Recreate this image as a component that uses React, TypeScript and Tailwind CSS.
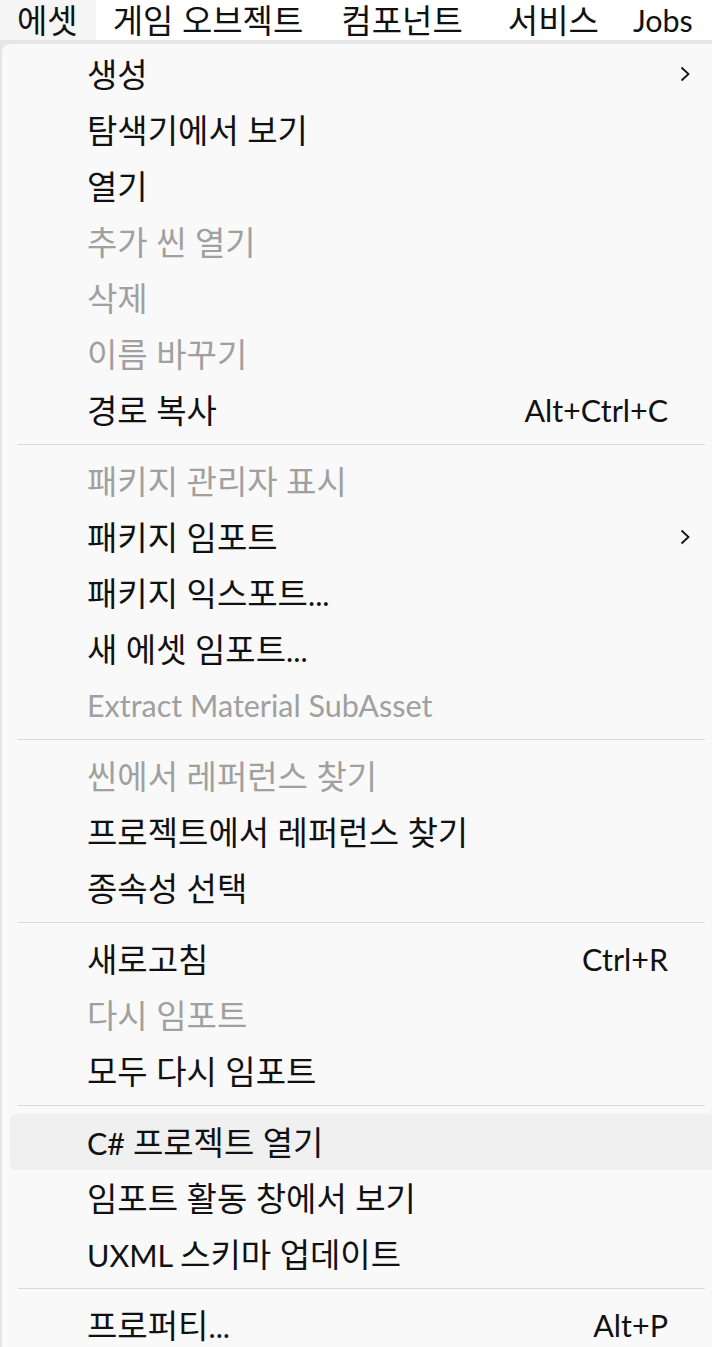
import React from 'react';

type Item = {
  label: string;
  disabled?: boolean;
  shortcut?: string;
  submenu?: boolean;
  hover?: boolean;
};

const groups: Item[][] = [
  [
    { label: '생성', submenu: true },
    { label: '탐색기에서 보기' },
    { label: '열기' },
    { label: '추가 씬 열기', disabled: true },
    { label: '삭제', disabled: true },
    { label: '이름 바꾸기', disabled: true },
    { label: '경로 복사', shortcut: 'Alt+Ctrl+C' },
  ],
  [
    { label: '패키지 관리자 표시', disabled: true },
    { label: '패키지 임포트', submenu: true },
    { label: '패키지 익스포트...' },
    { label: '새 에셋 임포트...' },
    { label: 'Extract Material SubAsset', disabled: true },
  ],
  [
    { label: '씬에서 레퍼런스 찾기', disabled: true },
    { label: '프로젝트에서 레퍼런스 찾기' },
    { label: '종속성 선택' },
  ],
  [
    { label: '새로고침', shortcut: 'Ctrl+R' },
    { label: '다시 임포트', disabled: true },
    { label: '모두 다시 임포트' },
  ],
  [
    { label: 'C# 프로젝트 열기', hover: true },
    { label: '임포트 활동 창에서 보기' },
    { label: 'UXML 스키마 업데이트' },
  ],
  [{ label: '프로퍼티...', shortcut: 'Alt+P' }],
];

const topMenus = [
  { label: '에셋', active: true, cls: 'pl-[17px] pr-[18px]' },
  { label: '게임 오브젝트', cls: 'pl-[17px] pr-[19px]' },
  { label: '컴포넌트', cls: 'pl-[19px] pr-[25px]' },
  { label: '서비스', cls: 'pl-[20px] pr-[16px]' },
  { label: 'Jobs', cls: 'pl-[18px] pr-[18px]' },
];

// hangul runs get a larger size so both scripts keep the reference widths
function Label({ text }: { text: string }) {
  const parts = text.split(/([\uAC00-\uD7A3][\uAC00-\uD7A3 ]*)/).filter(Boolean);
  return (
    <>
      {parts.map((p, i) =>
        /[\uAC00-\uD7A3]/.test(p) ? (
          <span key={i} className="text-[33px]">
            {p}
          </span>
        ) : (
          <span key={i}>{p}</span>
        )
      )}
    </>
  );
}

function Chevron() {
  return (
    <svg width="10" height="16" viewBox="0 0 10 16" fill="none">
      <path d="M1.5 1.5 L8.5 8 L1.5 14.5" stroke="#111" strokeWidth="1.8" />
    </svg>
  );
}

function MenuRow({ item }: { item: Item }) {
  return (
    <div
      className={`mx-2 flex h-14 items-center rounded-[5px] pl-[77px] ${
        item.hover ? 'bg-[#f0f0f0]' : ''
      } ${item.disabled ? 'text-[#a0a0a0]' : 'text-[#111]'}`}
    >
      <span className="whitespace-nowrap">
        <Label text={item.label} />
      </span>
      <span className="ml-auto whitespace-nowrap">{item.shortcut}</span>
      <span className="flex w-[46px] shrink-0 items-center pl-[12px]">
        {item.submenu && <Chevron />}
      </span>
    </div>
  );
}

export default function App() {
  return (
    <div
      className="h-[1347px] w-[712px] overflow-hidden bg-white text-[30.5px] leading-none"
      style={{ fontFamily: 'Lato, "Noto Sans CJK KR", sans-serif' }}
    >
      <nav className="flex h-10 items-center bg-white text-[#111]">
        {topMenus.map((m) => (
          <div
            key={m.label}
            className={`flex h-10 items-center whitespace-nowrap ${m.cls} ${
              m.active ? 'bg-[#f5f5f5]' : ''
            }`}
          >
            <Label text={m.label} />
          </div>
        ))}
      </nav>

      <div className="w-[724px] bg-[#e5e5e5] pl-[2px] pt-1">
        <div className="w-[720px] rounded-lg bg-[#f9f9f9] pt-[2px] pb-4">
          {groups.map((group, gi) => (
            <div key={gi}>
              {gi > 0 && (
                <div className="pt-[6px] pb-[8px]">
                  <div className="ml-4 mr-[17px] h-px bg-[#d9d9d9]" />
                </div>
              )}
              {group.map((item) => (
                <MenuRow key={item.label} item={item} />
              ))}
            </div>
          ))}
        </div>
      </div>
    </div>
  );
}
